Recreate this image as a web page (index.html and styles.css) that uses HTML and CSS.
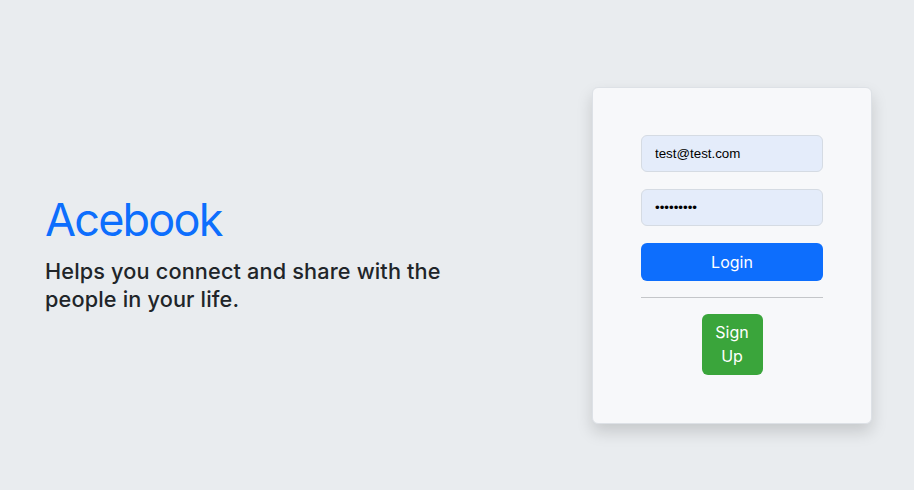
FILE: index.html
```html
<!DOCTYPE html>
<html lang="en">
<head>
<meta charset="utf-8">
<title>Acebook</title>
<link rel="stylesheet" href="styles.css">
</head>
<body>
<main class="page">
  <section class="intro">
    <h1 class="brand">Acebook</h1>
    <p class="tagline">Helps you connect and share with the people in your life.</p>
  </section>
  <section class="card">
    <form class="login-form">
      <input class="field" type="email" value="test@test.com">
      <input class="field" type="password" value="123456789">
      <button class="btn btn-login" type="button">Login</button>
      <hr class="divider">
      <button class="btn btn-signup" type="button">Sign<br>Up</button>
    </form>
  </section>
</main>
</body>
</html>
```

FILE: styles.css
```css
* { box-sizing: border-box; }
html, body { margin: 0; padding: 0; }
body {
  background: #e9ecef;
  font-family: Inter, "Liberation Sans", Arial, sans-serif;
  color: #212529;
  width: 914px;
  height: 490px;
  overflow: hidden;
}
.page {
  height: 490px;
  padding: 20px 42px 0 45px;
  display: flex;
  align-items: center;
  justify-content: space-between;
}
.intro {
  width: 430px;
  margin-bottom: 4px;
}
.brand {
  margin: 0 0 10px;
  font-weight: 400;
  font-size: 45px;
  line-height: 1.2;
  color: #0d6efd;
  letter-spacing: -1.8px;
}
.tagline {
  margin: 0;
  font-size: 21.7px;
  font-weight: 500;
  line-height: 28px;
  letter-spacing: 0.15px;
  color: #212529;
}
.card {
  width: 280px;
  background: #f7f8fa;
  border: 1px solid #dde1e6;
  border-radius: 6px;
  box-shadow: 0 8px 16px rgba(0, 0, 0, 0.15);
  padding: 47px 48px 48px;
}
.login-form {
  display: flex;
  flex-direction: column;
  align-items: center;
}
.field {
  width: 100%;
  height: 37px;
  margin: 0 0 17px;
  padding: 0 13px;
  border: 1px solid #d5dbe3;
  border-radius: 6px;
  background: #e4ecfa;
  font-family: "Liberation Sans", Arial, sans-serif;
  font-size: 13.33px;
  color: #000;
  outline: none;
}
.btn {
  border: 0;
  border-radius: 6px;
  color: #fff;
  font-family: Inter, "Liberation Sans", Arial, sans-serif;
  font-size: 16px;
  line-height: 24px;
  cursor: pointer;
}
.btn-login {
  width: 100%;
  height: 38px;
  background: #0d6efd;
}
.divider {
  width: 100%;
  margin: 16px 0;
  border: 0;
  border-top: 1px solid #c4c6c9;
}
.btn-signup {
  width: 61px;
  height: 61px;
  padding: 0;
  background: #3aa53b;
}
```
